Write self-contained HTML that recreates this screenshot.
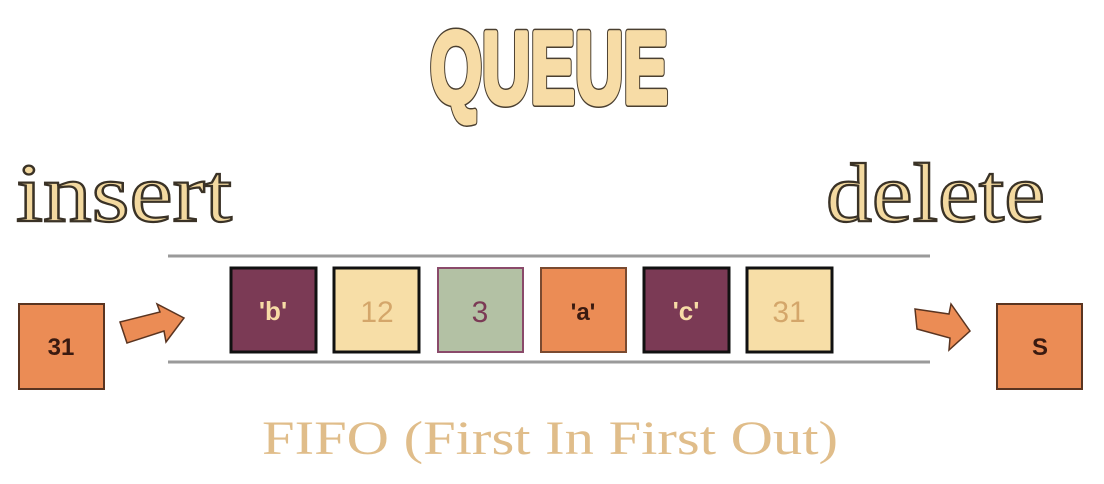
<!DOCTYPE html>
<html><head><style>html,body{margin:0;padding:0;background:#fff;}svg{display:block}</style></head>
<body>
<svg width="1104" height="484" viewBox="0 0 1104 484" xmlns="http://www.w3.org/2000/svg">
<text x="430" y="103" font-family="Liberation Sans Narrow, Liberation Sans, sans-serif" font-weight="bold" font-size="102" textLength="238" lengthAdjust="spacingAndGlyphs" fill="#f7dca6" stroke="#4a3f30" stroke-width="8" stroke-linejoin="round">QUEUE</text>
<text x="430" y="103" font-family="Liberation Sans Narrow, Liberation Sans, sans-serif" font-weight="bold" font-size="102" textLength="238" lengthAdjust="spacingAndGlyphs" fill="#f7dca6" stroke="#f7dca6" stroke-width="5" stroke-linejoin="round">QUEUE</text>
<text x="16" y="221" font-family="Liberation Serif, serif" font-size="84" textLength="216" lengthAdjust="spacingAndGlyphs" fill="#f3d9a0" stroke="#3a3226" stroke-width="2.2">insert</text>
<text x="826" y="221" font-family="Liberation Serif, serif" font-size="84" textLength="219" lengthAdjust="spacingAndGlyphs" fill="#f3d9a0" stroke="#3a3226" stroke-width="2.2">delete</text>
<line x1="168" y1="256" x2="930" y2="256" stroke="#9a9a9a" stroke-width="3"/>
<line x1="168" y1="362" x2="930" y2="362" stroke="#9a9a9a" stroke-width="3"/>
<g font-family="Liberation Sans, sans-serif" text-anchor="middle">
<rect x="231" y="268" width="85" height="84" fill="#7b3a55" stroke="#111" stroke-width="3"/>
<text x="273" y="320" font-size="26" font-weight="bold" fill="#f7dca6">'b'</text>
<rect x="334" y="268" width="85" height="84" fill="#f7dea7" stroke="#111" stroke-width="3"/>
<text x="377" y="322" font-size="30" fill="#d4a66a">12</text>
<rect x="438" y="268" width="85" height="84" fill="#b3c1a4" stroke="#8a4a6a" stroke-width="2"/>
<text x="480" y="322" font-size="30" fill="#7b3a55">3</text>
<rect x="541" y="268" width="85" height="84" fill="#eb8c55" stroke="#7a4a30" stroke-width="2"/>
<text x="583" y="320" font-size="24" font-weight="bold" fill="#3a1a10">'a'</text>
<rect x="644" y="268" width="85" height="84" fill="#7b3a55" stroke="#111" stroke-width="3"/>
<text x="686" y="320" font-size="26" font-weight="bold" fill="#f7dca6">'c'</text>
<rect x="747" y="268" width="85" height="84" fill="#f7dea7" stroke="#111" stroke-width="3"/>
<text x="789" y="322" font-size="30" fill="#d4a66a">31</text>
<rect x="19" y="304" width="85" height="85" fill="#eb8c55" stroke="#5a3420" stroke-width="2"/>
<text x="61" y="355" font-size="24" font-weight="bold" fill="#3a1a10">31</text>
<rect x="997" y="304" width="85" height="85" fill="#eb8c55" stroke="#5a3420" stroke-width="2"/>
<text x="1040" y="355" font-size="24" font-weight="bold" fill="#3a1a10">S</text>
</g>
<polygon points="120,322 160,312 157,304 184,318 166,342 164,331 127,343" fill="#eb8c55" stroke="#5a3420" stroke-width="1.5"/>
<polygon points="915,309 949,314 951,304 970,331 949,350 950,338 917,329" fill="#eb8c55" stroke="#5a3420" stroke-width="1.5"/>
<text x="262" y="454" font-family="Liberation Serif, serif" font-size="48" textLength="576" lengthAdjust="spacingAndGlyphs" fill="#e0bd8a">FIFO (First In First Out)</text>
</svg>
</body></html>
